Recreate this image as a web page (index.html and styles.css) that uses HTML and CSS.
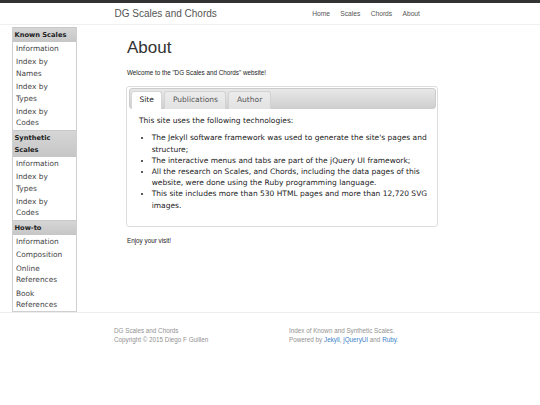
FILE: index.html
```html
<!DOCTYPE html>
<html lang="en">
<head>
<meta charset="utf-8">
<title>About - DG Scales and Chords</title>
<link rel="stylesheet" href="styles.css">
</head>
<body>
<header class="header">
  <div class="header-inner">
    <div class="brand">DG Scales and Chords</div>
    <nav class="nav">
      <a href="#">Home</a>
      <a href="#">Scales</a>
      <a href="#">Chords</a>
      <a href="#">About</a>
    </nav>
  </div>
</header>
<div class="main">
  <aside class="sidebar">
    <div class="side-head">Known Scales</div>
    <a class="side-item" href="#">Information</a>
    <a class="side-item" href="#">Index by Names</a>
    <a class="side-item" href="#">Index by Types</a>
    <a class="side-item" href="#">Index by Codes</a>
    <div class="side-head">Synthetic Scales</div>
    <a class="side-item" href="#">Information</a>
    <a class="side-item" href="#">Index by Types</a>
    <a class="side-item" href="#">Index by Codes</a>
    <div class="side-head">How-to</div>
    <a class="side-item" href="#">Information</a>
    <a class="side-item" href="#">Composition</a>
    <a class="side-item" href="#">Online References</a>
    <a class="side-item" href="#">Book References</a>
  </aside>
  <section class="content">
    <h1 class="title">About</h1>
    <p class="note">Welcome to the "DG Scales and Chords" website!</p>
    <div class="tabs">
      <ul class="tab-bar">
        <li class="tab active">Site</li>
        <li class="tab">Publications</li>
        <li class="tab">Author</li>
      </ul>
      <div class="panel">
        <p class="panel-intro">This site uses the following technologies:</p>
        <ul class="panel-list">
          <li>The Jekyll software framework was used to generate the site's pages and structure;</li>
          <li>The interactive menus and tabs are part of the jQuery UI framework;</li>
          <li>All the research on Scales, and Chords, including the data pages of this website, were done using the Ruby programming language.</li>
          <li>This site includes more than 530 HTML pages and more than 12,720 SVG images.</li>
        </ul>
      </div>
    </div>
    <p class="note enjoy">Enjoy your visit!</p>
  </section>
</div>
<footer class="footer">
  <div class="foot-col first">
    <div>DG Scales and Chords</div>
    <div>Copyright © 2015 Diego F Guillen</div>
  </div>
  <div class="foot-col">
    <div>Index of Known and Synthetic Scales.</div>
    <div>Powered by <a href="#">Jekyll</a>, <a href="#">jQueryUI</a> and <a href="#">Ruby</a>.</div>
  </div>
</footer>
</body>
</html>
```

FILE: styles.css
```css
* { box-sizing: border-box; }

html, body {
  margin: 0;
  padding: 0;
  background: #ffffff;
}

body {
  font-family: "Liberation Sans", Arial, sans-serif;
  color: #333333;
}

a { text-decoration: none; }

.header {
  border-top: 3px solid #333333;
  border-bottom: 1px solid #f0f0f0;
  background: #ffffff;
}

.header-inner {
  display: flex;
  align-items: center;
  height: 21px;
  padding-left: 114.5px;
}

.brand {
  width: 192.5px;
  font-size: 10px;
  color: #555555;
}

.nav {
  display: flex;
}

.nav a {
  font-size: 6.7px;
  color: #555555;
  padding: 0 5.15px;
}

.main {
  display: flex;
  align-items: flex-start;
}

.sidebar {
  margin-left: 12px;
  margin-top: 2px;
  width: 65px;
  border: 1px solid #cfcfcf;
  border-top: 0;
  display: flex;
  flex-direction: column;
  font-family: "DejaVu Sans", Verdana, sans-serif;
  background: #ffffff;
}

.side-head {
  font-weight: bold;
  font-size: 6.7px;
  line-height: 12px;
  padding: 1px 1.5px;
  color: #222222;
  background: linear-gradient(#d6d6d6, #c6c6c6);
  border-top: 1px solid #c8c8c8;
}

.side-item {
  font-size: 7.4px;
  line-height: 11.4px;
  padding: 1px 12px 1px 3px;
  color: #444444;
}

.content {
  margin-left: 49px;
  width: 312px;
  display: flex;
  flex-direction: column;
}

.title {
  margin: 13px 0 0 1px;
  font-size: 17px;
  line-height: 20px;
  font-weight: normal;
  color: #333333;
}

.note {
  margin: 10px 0 0 1px;
  font-size: 6.3px;
  line-height: 9px;
  color: #222222;
}

.enjoy {
  margin-top: 9.5px;
}

.tabs {
  margin-top: 8.7px;
  border: 1px solid #dddddd;
  border-radius: 3px;
  padding: 1.5px;
  font-family: "DejaVu Sans", Verdana, sans-serif;
  font-size: 7.5px;
  background: #ffffff;
}

.tab-bar {
  list-style: none;
  margin: 0;
  display: flex;
  padding: 1.5px 1.5px 0;
  border: 1px solid #cccccc;
  border-radius: 3px;
  background: linear-gradient(#e8e8e8, #cfcfcf);
}

.tab {
  margin-right: 2px;
  margin-bottom: -1px;
  padding: 3.2px 7.5px;
  line-height: 9.75px;
  border: 1px solid #d3d3d3;
  border-bottom: 0;
  border-radius: 3px 3px 0 0;
  background: linear-gradient(#ececec, #e2e2e2);
  color: #555555;
}

.tab.active {
  background: #ffffff;
  color: #212121;
  padding-bottom: 4.2px;
  border-color: #d6d6d6;
}

.panel {
  padding: 6.6px 4px 13.5px 10.5px;
  color: #222222;
}

.panel-intro {
  margin: 0 0 5.8px;
  line-height: 11.2px;
}

.panel-list {
  margin: 0;
  padding-left: 12.7px;
  line-height: 11.2px;
}

.footer {
  display: flex;
  border-top: 1px solid #eeeeee;
  background: #ffffff;
  padding: 12.4px 0 40px 114px;
  font-size: 6.3px;
  line-height: 9.3px;
  color: #929292;
}

.foot-col.first {
  width: 175px;
}

.footer a {
  color: #3a7fc8;
}
```
